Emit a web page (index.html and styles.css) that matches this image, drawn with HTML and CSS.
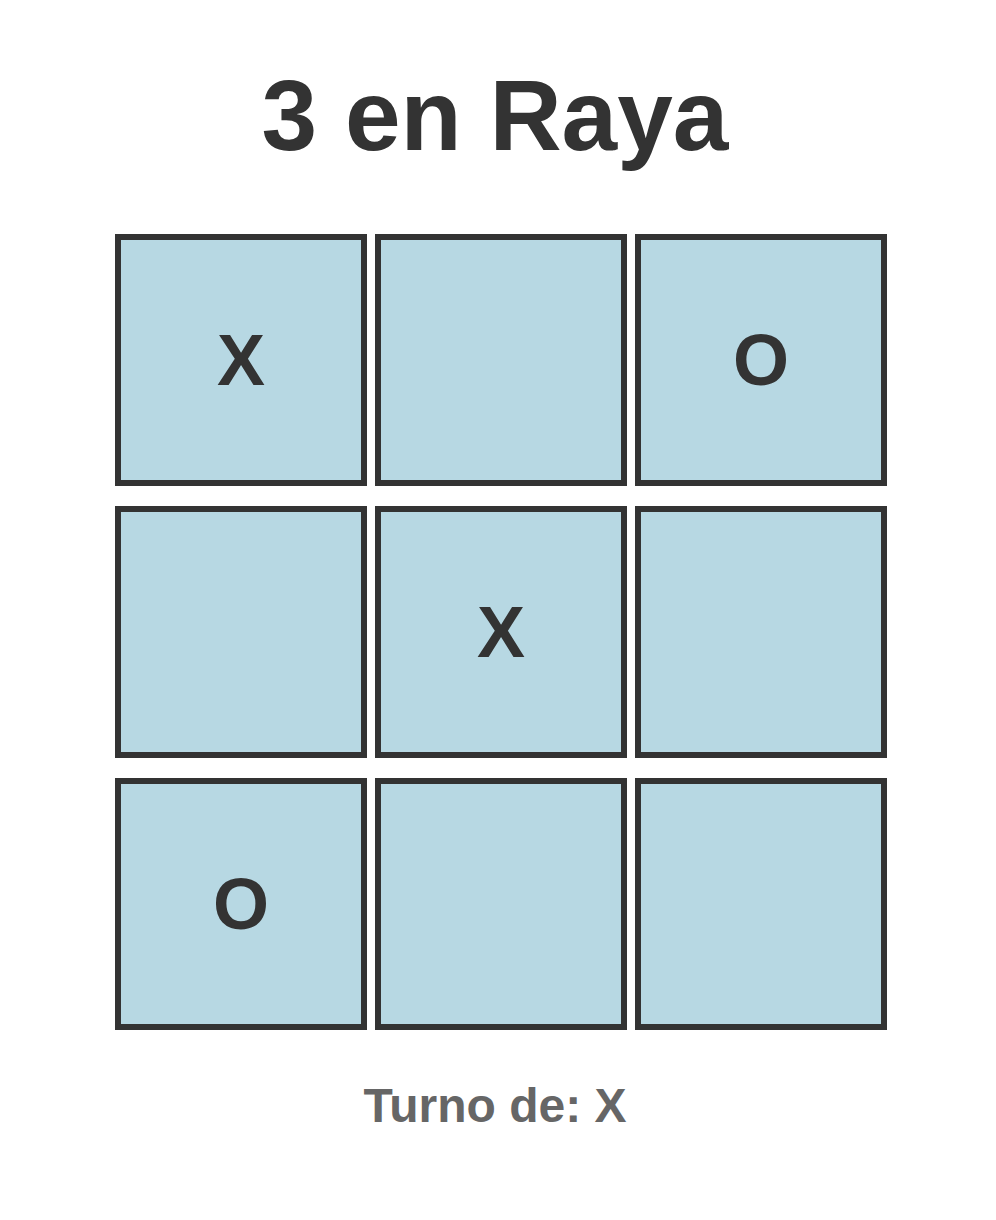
FILE: index.html
```html
<!DOCTYPE html>
<html lang="es">

<head>
    <meta charset="UTF-8">
    <meta name="viewport" content="width=device-width, initial-scale=1.0">
    <title>3 en Raya</title>
    <link rel="stylesheet" href="styles.css">
</head>

<body>
    <h1 class="title">3 en Raya</h1>
    <main class="board">
        <div class="cell">X</div>
        <div class="cell"></div>
        <div class="cell">O</div>
        <div class="cell"></div>
        <div class="cell">X</div>
        <div class="cell"></div>
        <div class="cell">O</div>
        <div class="cell"></div>
        <div class="cell"></div>
    </main>
    <p class="status">Turno de: X</p>
</body>

</html>
```

FILE: styles.css
```css
body {
    font-family: "Liberation Sans", Arial, sans-serif;
    margin: 0;
    padding-right: 6px;
    color: #333;
    text-align: center;
}

.title {
    font-size: 100px;
    font-weight: bold;
    margin: 58px 0 61px;
}

.board {
    display: grid;
    grid-template-columns: repeat(3, 252px);
    column-gap: 8px;
    row-gap: 20px;
    justify-content: center;
    padding-left: 12px;
}

.cell {
    box-sizing: border-box;
    height: 252px;
    border: 6px solid #333;
    background-color: #b7d8e3;
    display: flex;
    align-items: center;
    justify-content: center;
    font-size: 72px;
    font-weight: bold;
    cursor: pointer;
}

.status {
    font-size: 48px;
    font-weight: bold;
    color: #666;
    margin: 48px 0 0;
}
```
